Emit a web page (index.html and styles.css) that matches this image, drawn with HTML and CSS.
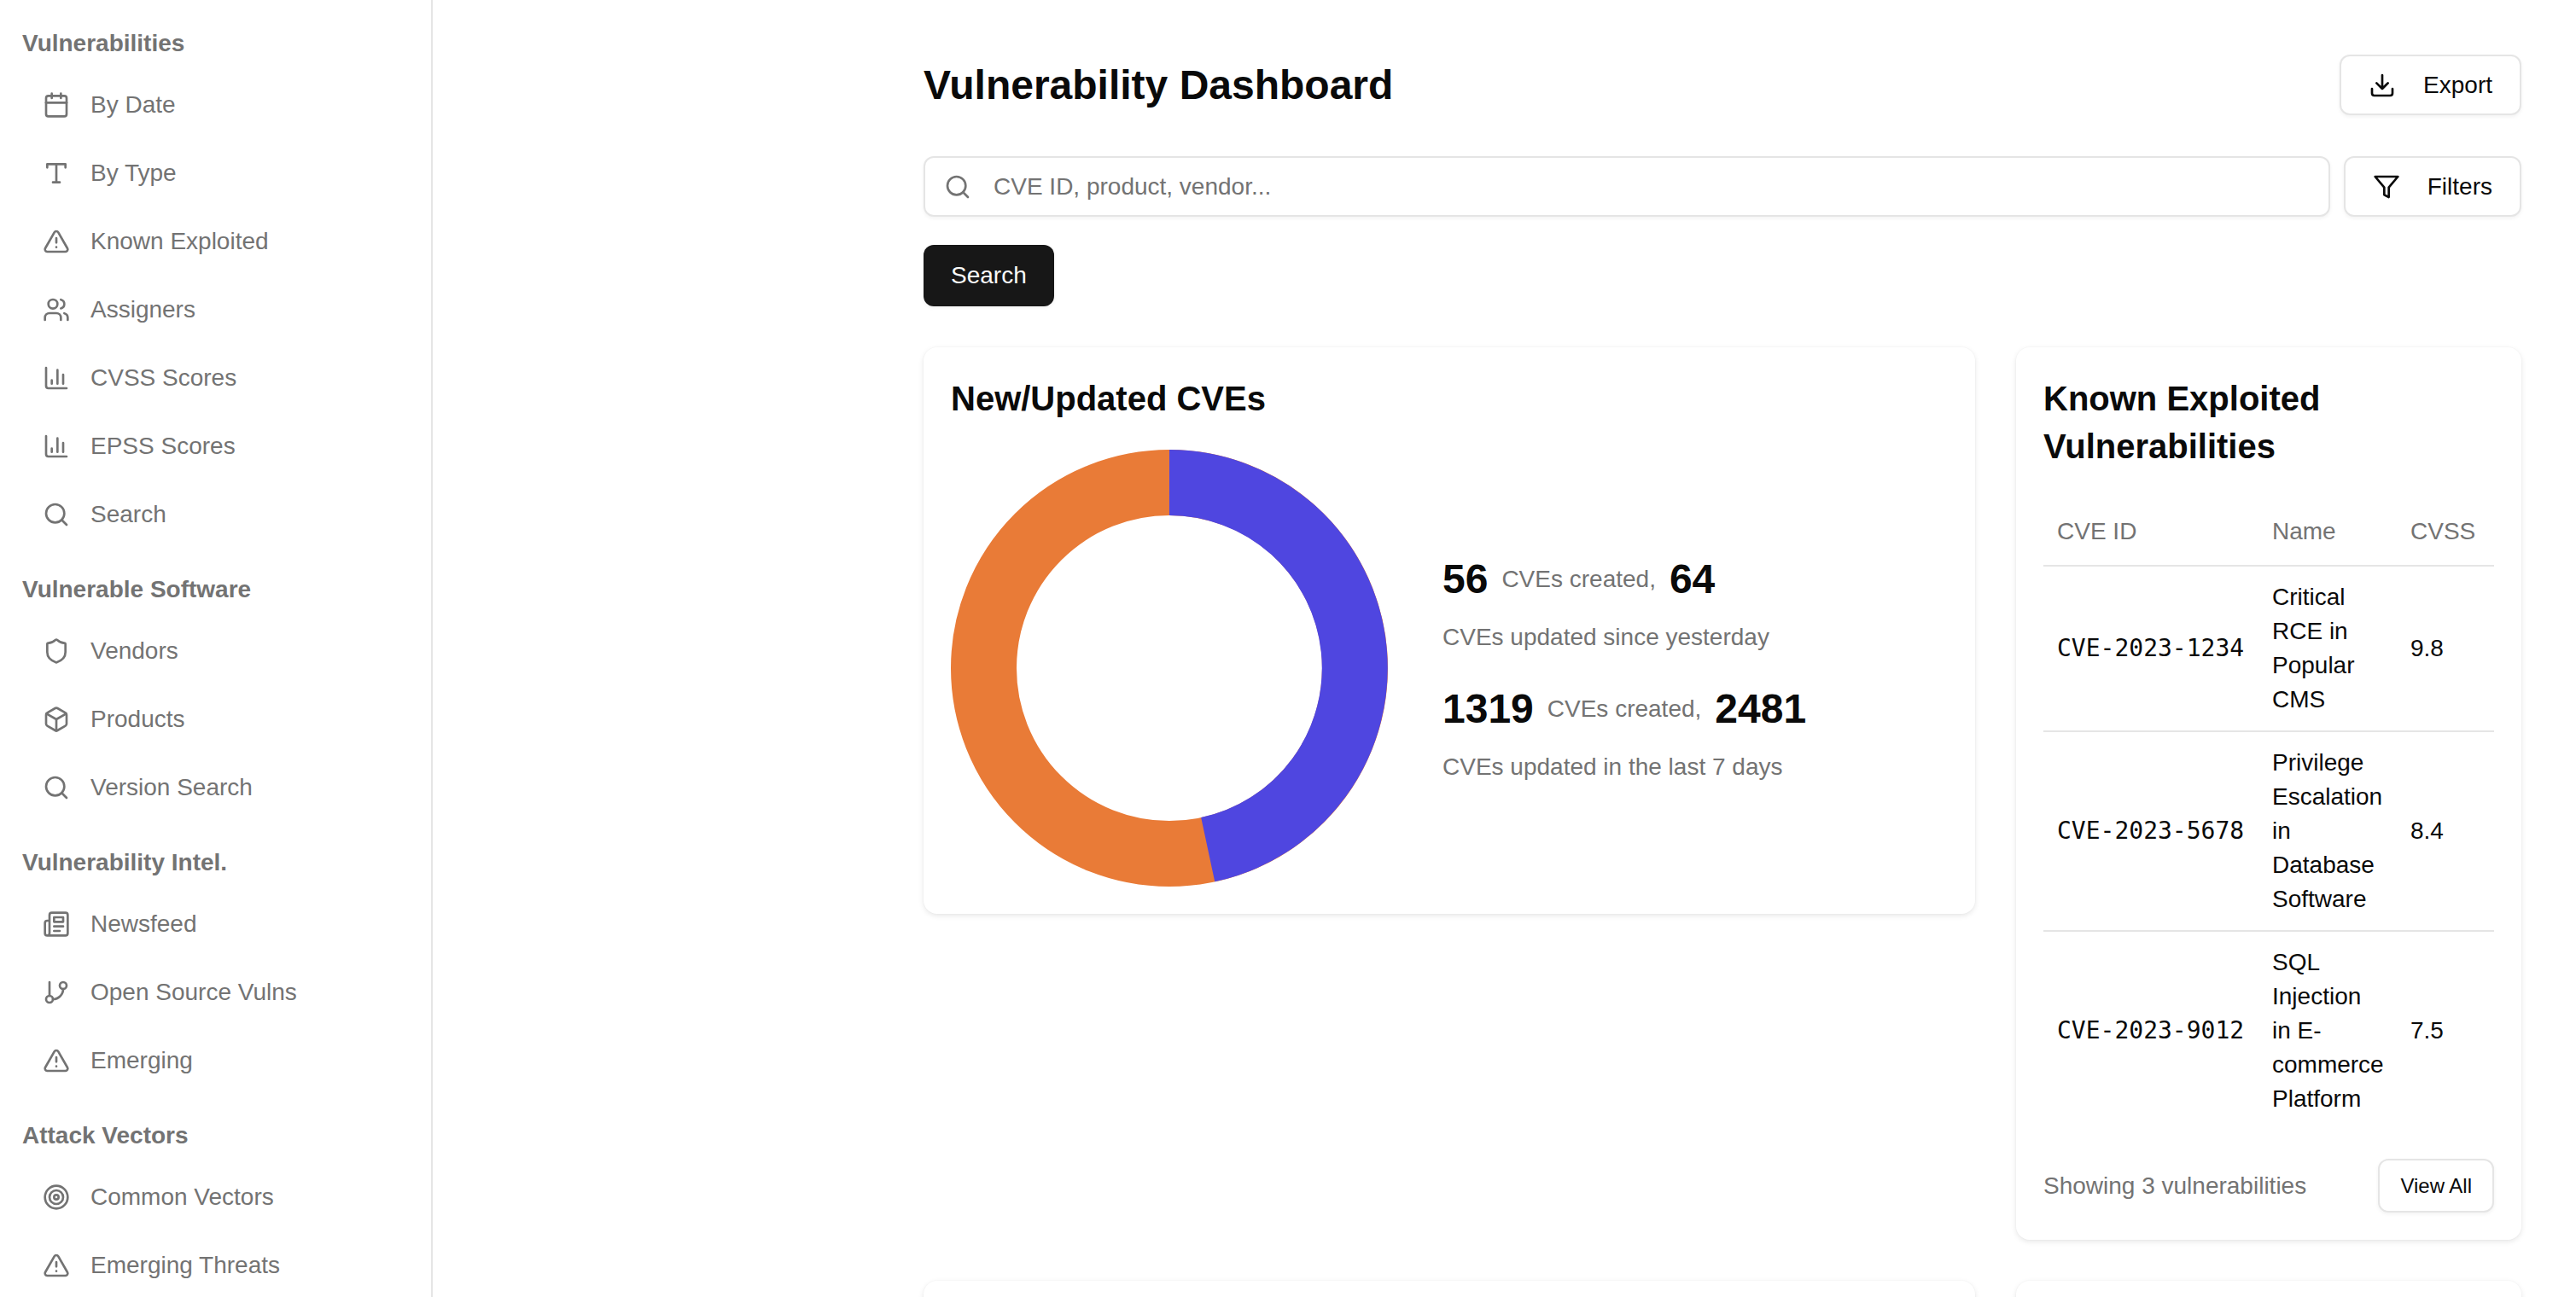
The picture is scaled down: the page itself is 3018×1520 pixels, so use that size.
FILE: index.html
```html
<!DOCTYPE html>
<html lang="en">
<head>
<meta charset="utf-8">
<title>Vulnerability Dashboard</title>
<link rel="stylesheet" href="styles.css">
</head>
<body>
<svg class="defs" aria-hidden="true">
  <symbol id="i-calendar" viewBox="0 0 24 24"><path d="M8 2v4M16 2v4"/><rect x="3" y="4" width="18" height="18" rx="2"/><path d="M3 10h18"/></symbol>
  <symbol id="i-type" viewBox="0 0 24 24"><path d="M4 7V4h16v3M9 20h6M12 4v16"/></symbol>
  <symbol id="i-alert" viewBox="0 0 24 24"><path d="m21.73 18-8-14a2 2 0 0 0-3.48 0l-8 14A2 2 0 0 0 4 21h16a2 2 0 0 0 1.73-3"/><path d="M12 9v4M12 17h.01"/></symbol>
  <symbol id="i-users" viewBox="0 0 24 24"><path d="M16 21v-2a4 4 0 0 0-4-4H6a4 4 0 0 0-4 4v2"/><circle cx="9" cy="7" r="4"/><path d="M22 21v-2a4 4 0 0 0-3-3.87M16 3.13a4 4 0 0 1 0 7.75"/></symbol>
  <symbol id="i-chart" viewBox="0 0 24 24"><path d="M3 3v16a2 2 0 0 0 2 2h16M18 17V9M13 17V5M8 17v-3"/></symbol>
  <symbol id="i-search" viewBox="0 0 24 24"><circle cx="11" cy="11" r="8"/><path d="m21 21-4.3-4.3"/></symbol>
  <symbol id="i-shield" viewBox="0 0 24 24"><path d="M20 13c0 5-3.5 7.5-7.66 8.95a1 1 0 0 1-.67-.01C7.5 20.5 4 18 4 13V6a1 1 0 0 1 1-1c2 0 4.5-1.2 6.24-2.72a1.17 1.17 0 0 1 1.52 0C14.51 3.81 17 5 19 5a1 1 0 0 1 1 1z"/></symbol>
  <symbol id="i-box" viewBox="0 0 24 24"><path d="M21 8a2 2 0 0 0-1-1.73l-7-4a2 2 0 0 0-2 0l-7 4A2 2 0 0 0 3 8v8a2 2 0 0 0 1 1.73l7 4a2 2 0 0 0 2 0l7-4A2 2 0 0 0 21 16Z"/><path d="m3.3 7 8.7 5 8.7-5M12 22V12"/></symbol>
  <symbol id="i-news" viewBox="0 0 24 24"><path d="M4 22h16a2 2 0 0 0 2-2V4a2 2 0 0 0-2-2H8a2 2 0 0 0-2 2v16a2 2 0 0 1-2 2Zm0 0a2 2 0 0 1-2-2v-9c0-1.1.9-2 2-2h2"/><path d="M18 14h-8M15 18h-5M10 6h8v4h-8V6Z"/></symbol>
  <symbol id="i-branch" viewBox="0 0 24 24"><path d="M6 3v12"/><circle cx="18" cy="6" r="3"/><circle cx="6" cy="18" r="3"/><path d="M18 9a9 9 0 0 1-9 9"/></symbol>
  <symbol id="i-target" viewBox="0 0 24 24"><circle cx="12" cy="12" r="10"/><circle cx="12" cy="12" r="6"/><circle cx="12" cy="12" r="2"/></symbol>
  <symbol id="i-download" viewBox="0 0 24 24"><path d="M21 15v4a2 2 0 0 1-2 2H5a2 2 0 0 1-2-2v-4"/><path d="m7 10 5 5 5-5M12 15V3"/></symbol>
  <symbol id="i-filter" viewBox="0 0 24 24"><path d="M22 3H2l8 9.46V19l4 2v-8.54L22 3z"/></symbol>
</svg>

<div class="shell">
  <aside class="sidebar">
    <section class="nav-section">
      <h2 class="nav-heading">Vulnerabilities</h2>
      <ul class="nav-list">
        <li class="nav-item"><svg class="icon"><use href="#i-calendar"/></svg>By Date</li>
        <li class="nav-item"><svg class="icon"><use href="#i-type"/></svg>By Type</li>
        <li class="nav-item"><svg class="icon"><use href="#i-alert"/></svg>Known Exploited</li>
        <li class="nav-item"><svg class="icon"><use href="#i-users"/></svg>Assigners</li>
        <li class="nav-item"><svg class="icon"><use href="#i-chart"/></svg>CVSS Scores</li>
        <li class="nav-item"><svg class="icon"><use href="#i-chart"/></svg>EPSS Scores</li>
        <li class="nav-item"><svg class="icon"><use href="#i-search"/></svg>Search</li>
      </ul>
    </section>
    <section class="nav-section">
      <h2 class="nav-heading">Vulnerable Software</h2>
      <ul class="nav-list">
        <li class="nav-item"><svg class="icon"><use href="#i-shield"/></svg>Vendors</li>
        <li class="nav-item"><svg class="icon"><use href="#i-box"/></svg>Products</li>
        <li class="nav-item"><svg class="icon"><use href="#i-search"/></svg>Version Search</li>
      </ul>
    </section>
    <section class="nav-section">
      <h2 class="nav-heading">Vulnerability Intel.</h2>
      <ul class="nav-list">
        <li class="nav-item"><svg class="icon"><use href="#i-news"/></svg>Newsfeed</li>
        <li class="nav-item"><svg class="icon"><use href="#i-branch"/></svg>Open Source Vulns</li>
        <li class="nav-item"><svg class="icon"><use href="#i-alert"/></svg>Emerging</li>
      </ul>
    </section>
    <section class="nav-section">
      <h2 class="nav-heading">Attack Vectors</h2>
      <ul class="nav-list">
        <li class="nav-item"><svg class="icon"><use href="#i-target"/></svg>Common Vectors</li>
        <li class="nav-item"><svg class="icon"><use href="#i-alert"/></svg>Emerging Threats</li>
      </ul>
    </section>
  </aside>

  <main class="main">
    <header class="page-header">
      <h1 class="page-title">Vulnerability Dashboard</h1>
      <button class="btn btn-outline"><svg class="icon"><use href="#i-download"/></svg>Export</button>
    </header>

    <div class="search-row">
      <div class="search-box">
        <svg class="icon search-icon"><use href="#i-search"/></svg>
        <input class="search-input" type="text" placeholder="CVE ID, product, vendor...">
      </div>
      <button class="btn btn-outline"><svg class="icon"><use href="#i-filter"/></svg>Filters</button>
    </div>
    <button class="btn btn-dark">Search</button>

    <div class="card-grid">
      <section class="card card-cves">
        <h3 class="card-title">New/Updated CVEs</h3>
        <div class="cve-body">
          <svg class="donut" viewBox="0 0 512 512" role="img" aria-label="Created versus updated CVEs">
            <circle class="donut-updated" cx="256" cy="256" r="217.5"/>
            <path class="donut-created" d="M256 38.5A217.5 217.5 0 0 1 301.2 468.7"/>
          </svg>
          <div class="stats">
            <div class="stat">
              <div class="stat-line"><strong class="stat-num">56</strong><span>CVEs created,</span><strong class="stat-num">64</strong></div>
              <p class="stat-note">CVEs updated since yesterday</p>
            </div>
            <div class="stat">
              <div class="stat-line"><strong class="stat-num">1319</strong><span>CVEs created,</span><strong class="stat-num">2481</strong></div>
              <p class="stat-note">CVEs updated in the last 7 days</p>
            </div>
          </div>
        </div>
      </section>

      <section class="card card-kev">
        <h3 class="card-title">Known Exploited Vulnerabilities</h3>
        <table class="kev-table">
          <colgroup><col class="col-id"><col class="col-name"><col class="col-score"></colgroup>
          <thead>
            <tr><th>CVE ID</th><th>Name</th><th>CVSS</th></tr>
          </thead>
          <tbody>
            <tr><td class="mono">CVE-2023-1234</td><td>Critical RCE in Popular CMS</td><td>9.8</td></tr>
            <tr><td class="mono">CVE-2023-5678</td><td>Privilege Escalation in Database Software</td><td>8.4</td></tr>
            <tr><td class="mono">CVE-2023-9012</td><td>SQL Injection in E-commerce Platform</td><td>7.5</td></tr>
          </tbody>
        </table>
        <footer class="card-footer">
          <span class="muted">Showing 3 vulnerabilities</span>
          <button class="btn btn-outline btn-small">View All</button>
        </footer>
      </section>

      <section class="card card-stub"></section>
      <section class="card card-stub"></section>
    </div>
  </main>
</div>
</body>
</html>
```

FILE: styles.css
```css
* { box-sizing: border-box; }

html, body {
  margin: 0;
  height: 100%;
  overflow: hidden;
  background: #fff;
}

body {
  font-family: "Liberation Sans", Arial, sans-serif;
  font-size: 28px;
  line-height: 40px;
  color: #0a0a0a;
}

.defs { display: none; }

.icon {
  width: 32px;
  height: 32px;
  flex: none;
  fill: none;
  stroke: currentColor;
  stroke-width: 2;
  stroke-linecap: round;
  stroke-linejoin: round;
}

.shell {
  display: flex;
  height: 100vh;
  overflow: hidden;
}

/* Sidebar */
.sidebar {
  width: 507px;
  flex: none;
  padding: 31px 26px 0;
  border-right: 2px solid #e5e5e5;
  color: #737373;
}

.nav-section { margin-bottom: 28px; }

.nav-heading {
  margin: 0 0 12px;
  font-size: 28px;
  line-height: 40px;
  font-weight: 700;
}

.nav-list {
  margin: 0;
  padding: 0;
  list-style: none;
}

.nav-item {
  display: flex;
  align-items: center;
  gap: 24px;
  height: 80px;
  padding-left: 24px;
}

/* Main */
.main {
  flex: 1;
  min-width: 0;
  padding: 64px 64px 0 575px;
}

.page-header {
  display: flex;
  justify-content: space-between;
  align-items: center;
  margin-bottom: 48px;
}

.page-title {
  margin: 0;
  font-size: 48px;
  line-height: 70px;
  font-weight: 700;
}

.btn {
  display: inline-flex;
  align-items: center;
  gap: 32px;
  height: 71px;
  padding: 0 32px;
  border-radius: 12px;
  font-family: inherit;
  font-size: 28px;
  line-height: 40px;
  box-shadow: 0 2px 4px rgba(0, 0, 0, 0.05);
}

.btn-outline {
  border: 2px solid #e5e5e5;
  background: #fff;
  color: #0a0a0a;
}

.btn-dark {
  display: flex;
  height: 72px;
  border: 0;
  background: #171717;
  color: #fafafa;
}

.btn-small {
  height: 63px;
  padding: 0 24px;
  font-size: 24px;
}

.search-row {
  display: flex;
  gap: 16px;
  margin-bottom: 33px;
}

.search-box {
  position: relative;
  flex: 1;
}

.search-icon {
  position: absolute;
  left: 24px;
  top: 20px;
  color: #737373;
}

.search-input {
  display: block;
  width: 100%;
  height: 71px;
  padding: 0 24px 0 80px;
  border: 2px solid #e5e5e5;
  border-radius: 12px;
  background: #fff;
  font-family: inherit;
  font-size: 28px;
  color: #0a0a0a;
  box-shadow: 0 2px 4px rgba(0, 0, 0, 0.05);
}

.search-input::placeholder {
  color: #737373;
  opacity: 1;
}

/* Cards */
.card-grid {
  display: grid;
  grid-template-columns: 1232px 592px;
  gap: 48px;
  align-items: start;
  margin-top: 48px;
}

.card {
  padding: 32px;
  border-radius: 16px;
  background: #fff;
  box-shadow: 0 0 0 1px rgba(0, 0, 0, 0.01), 0 2px 6px rgba(0, 0, 0, 0.1);
}

.card-stub { height: 400px; }

.card-title {
  margin: 0 0 32px;
  font-size: 40px;
  line-height: 56px;
  font-weight: 700;
}

.cve-body {
  display: flex;
  align-items: center;
  gap: 64px;
}

.donut {
  width: 512px;
  height: 512px;
  flex: none;
  fill: none;
  stroke-width: 77;
}

.donut-updated { stroke: #e97b37; }
.donut-created { stroke: #4f46e0; }

.stats {
  display: flex;
  flex-direction: column;
  gap: 32px;
  color: #737373;
}

.stat {
  display: flex;
  flex-direction: column;
  gap: 16px;
}

.stat-line {
  display: flex;
  align-items: center;
  gap: 16px;
  height: 64px;
  line-height: 64px;
}

.stat-num {
  font-size: 48px;
  font-weight: 700;
  color: #0a0a0a;
}

.stat-note { margin: 0; }

/* Table */
.kev-table {
  width: 100%;
  table-layout: fixed;
  border-collapse: collapse;
}

.col-id { width: 252px; }
.col-name { width: 162px; }
.col-score { width: 114px; }

.kev-table th {
  height: 80px;
  padding: 0 16px;
  text-align: left;
  font-weight: 400;
  color: #737373;
  border-bottom: 2px solid #e5e5e5;
}

.kev-table td {
  padding: 16px;
  border-bottom: 2px solid #e5e5e5;
}

.kev-table tbody tr:last-child td { border-bottom: 0; }

.mono {
  font-family: "DejaVu Sans Mono", "Liberation Mono", monospace;
  font-size: 28px;
  white-space: nowrap;
}

.card-footer {
  display: flex;
  justify-content: space-between;
  align-items: center;
  margin-top: 34px;
}

.muted { color: #737373; }
```
